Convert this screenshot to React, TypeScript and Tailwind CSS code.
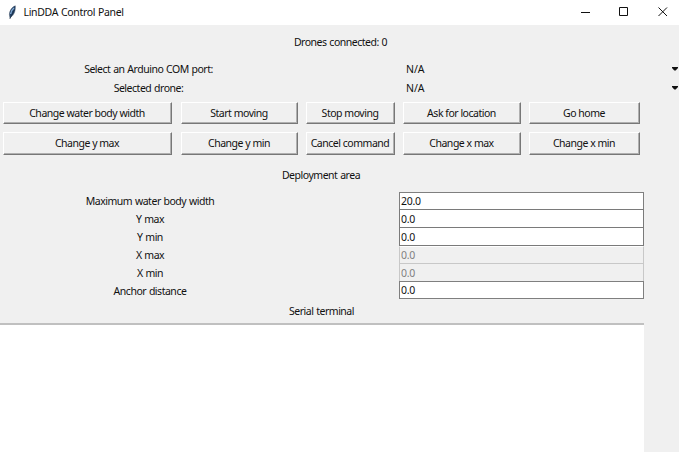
import React from "react";

const buttonRows = [
  { height: "h-[22px]", pad: "pb-0", labels: ["Change water body width", "Start moving", "Stop moving", "Ask for location", "Go home"] },
  { height: "h-[23px]", pad: "pb-[2px]", labels: ["Change y max", "Change y min", "Cancel command", "Change x max", "Change x min"] },
];

const fields = [
  { label: "Maximum water body width", value: "20.0", box: "h-[18px] border-[#7f7f7f] bg-white" },
  { label: "Y max", value: "0.0", box: "-mt-px h-[19px] border-[#7a7a7a] bg-white" },
  { label: "Y min", value: "0.0", box: "-mt-px h-[19px] border-[#7a7a7a] bg-white" },
  { label: "X max", value: "0.0", box: "h-[18px] border-[#c8c8c8] border-t-white bg-[#f0f0f0] text-[#808080]" },
  { label: "X min", value: "0.0", box: "-mt-px h-[19px] border-[#c8c8c8] bg-[#f0f0f0] text-[#808080]" },
  { label: "Anchor distance", value: "0.0", box: "-mt-px h-[18px] border-[#7f7f7f] bg-white" },
];

function Feather() {
  return (
    <svg width="10" height="15" viewBox="0 0 10 15" fill="none">
      <path d="M7.3 .8C4 2 1.5 5.5 1.4 9.5L2 13.6L2.8 12C5.8 10.5 7.7 6 7.3 .8Z" fill="#24446b" stroke="#2a3a4e" strokeWidth=".4" />
      <path d="M6 3C4 4.5 2.8 7 2.6 9" stroke="#84acd5" strokeWidth="1.4" />
      <path d="M6.5 4.5L2 13.5" stroke="#1a2c42" strokeWidth=".7" />
    </svg>
  );
}

function OptionRow({ label }: { label: string }) {
  return (
    <div className="flex h-[19.5px] items-center">
      <div className="w-[297px] text-center">{label}</div>
      <div className="ml-[109px] grow tracking-[-0.1px]">N/A</div>
      <svg className="mr-px" width="6" height="4" viewBox="0 0 6 4">
        <path d="M0 0H6V1L3.7 3.5H2.3L0 1Z" fill="#111" />
      </svg>
    </div>
  );
}

export default function App() {
  return (
    <div className="flex h-[452px] w-[679px] flex-col overflow-hidden bg-[#f0f0f0] font-['Noto_Sans',sans-serif] text-[10.5px] leading-[16px] tracking-[-0.48px] [word-spacing:0.5px] whitespace-nowrap text-[#111]">
      <header className="flex h-[25px] shrink-0 items-center bg-white pl-[8px]">
        <Feather />
        <span className="ml-[5.5px] grow -translate-y-px tracking-[-0.33px]">LinDDA Control Panel</span>
        <svg width="88" height="11" viewBox="0 0 88 11" className="mr-[11px]" fill="none" stroke="#111">
          <path d="M1 5.5H10" />
          <path d="M39.5 .5H47.5V8.5H39.5Z" />
          <path d="M78.5 .5L87 9M87 .5L78.5 9" />
        </svg>
      </header>
      <div className="mt-[9px] h-[16px] shrink-0 pl-[2px] text-center">Drones connected: 0</div>
      <section className="mt-[9px] shrink-0">
        <OptionRow label="Select an Arduino COM port:" />
        <OptionRow label="Selected drone:" />
      </section>
      <section className="mt-[4px] flex shrink-0 flex-col gap-[8px] pl-[3px]">
        {buttonRows.map((row) => (
          <div key={row.labels[0]} className={"grid grid-cols-[170px_117px_89px_118px_111px] gap-x-[8px] " + row.height}>
            {row.labels.map((text) => (
              <button key={text} className={"flex items-center justify-center border border-[#777] border-t-white border-l-white bg-[#f0f0f0] pr-px shadow-[inset_-1px_-1px_0_#b0b0b0] first:mr-px " + row.pad}>
                {text}
              </button>
            ))}
          </div>
        ))}
      </section>
      <div className="mt-[12px] h-[16px] w-[642px] shrink-0 text-center">Deployment area</div>
      <section className="mt-[9px] shrink-0">
        {fields.map((field) => (
          <div key={field.label} className="flex">
            <div className="flex h-[18px] w-[300px] items-center justify-center last-of-type:pb-0">{field.label}</div>
            <div className={"ml-[99px] flex w-[245px] items-center border pl-px tracking-[-0.3px] " + field.box}>{field.value}</div>
          </div>
        ))}
      </section>
      <div className="mt-[3px] h-[16px] w-[643px] shrink-0 text-center">Serial terminal</div>
      <div className="mt-[4px] w-[644px] grow border-t-2 border-[#c0c0c0] bg-white" />
    </div>
  );
}
